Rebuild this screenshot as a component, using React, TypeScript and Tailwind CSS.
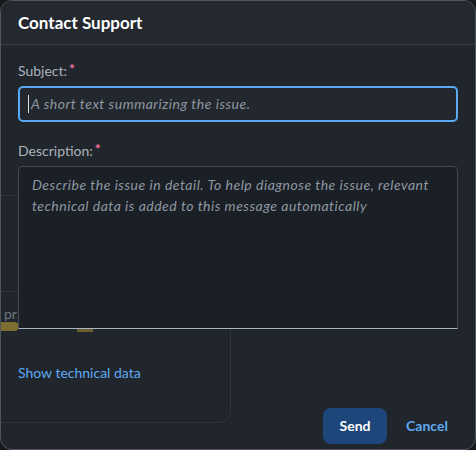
export default function App() {
  return (
    <div className="w-[476px] h-[450px] bg-[#17191d]" style={{ fontFamily: 'Lato, "Noto Sans", sans-serif' }}>
      <div className="relative flex h-full w-full flex-col overflow-hidden rounded-xl border border-[#50565e] bg-[#21252c]">
        {/* faint page content seen through the dialog */}
        <div className="pointer-events-none absolute inset-0">
          <div className="absolute left-[-20px] top-[194px] h-[228px] w-[250px] rounded-br-xl border border-[#30353c]" />
          <div className="absolute left-0 top-[290px] h-px w-[17px] bg-[#30353c]" />
          <span className="absolute left-[3px] top-[303px] text-sm text-[#6f7780]">pr</span>
          <div className="absolute left-[-6px] top-[321px] h-[9px] w-[24px] rounded-full bg-[#7d6d30]" />
          <div className="absolute left-[76px] top-[328px] h-[3px] w-[16px] bg-[#6b5f2f]" />
        </div>

        <div className="relative flex h-11 shrink-0 items-center border-b border-[#3a3f46] bg-[#24282f] px-[17px]">
          <h1 className="text-[17px] font-bold text-white">Contact Support</h1>
        </div>

        <div className="relative flex flex-1 flex-col px-[17px] pt-[17px]">
          <label className="flex h-[18px] items-center text-sm text-[#a9b3be]">
            Subject:<span className="ml-[2px] -mt-1 font-bold text-[#f4739f]">*</span>
          </label>
          <div className="mt-[6px] flex h-9 items-center rounded-[5px] border-2 border-[#5aa9f5] bg-[#23272e] px-[8px]">
            <span className="h-[18px] w-px bg-[#d9dee3]" />
            <span className="ml-[2px] text-sm italic tracking-[0.5px] text-[#8e98a3]">A short text summarizing the issue.</span>
          </div>

          <label className="mt-5 flex h-[18px] items-center text-sm text-[#a9b3be]">
            Description:<span className="ml-[2px] -mt-1 font-bold text-[#f4739f]">*</span>
          </label>
          <div className="mt-[6px] h-[163px] rounded-t-[5px] border border-[#454b53] border-b-[#a9b4be] bg-[#1b1f26] px-[13px] pt-[7px]">
            <p className="text-sm italic leading-[21px] tracking-[0.5px] text-[#8e98a3]">
              Describe the issue in detail. To help diagnose the issue, relevant technical data is added to this message automatically
            </p>
          </div>

          <a className="mt-[34px] text-sm text-[#5ea9f2]">Show technical data</a>
        </div>

        <div className="relative flex h-[46px] shrink-0 items-center justify-end gap-2 px-4">
          <button className="h-9 w-16 rounded-lg bg-[#1d477a] text-sm font-bold text-white">Send</button>
          <button className="h-9 w-16 rounded-lg text-sm font-bold text-[#5ea9f2]">Cancel</button>
        </div>
      </div>
    </div>
  )
}
